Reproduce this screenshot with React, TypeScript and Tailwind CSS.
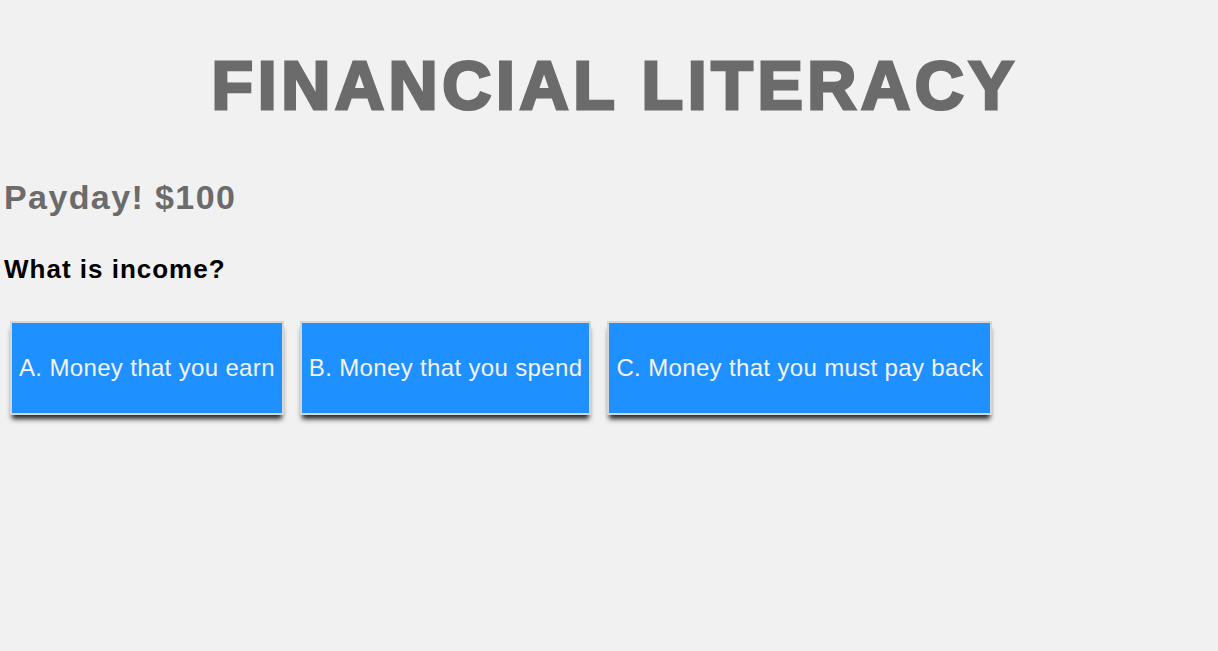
import React from 'react';

const answers = ['A. Money that you earn', 'B. Money that you spend', 'C. Money that you must pay back'];

export default function App() {
  return (
    <div className="min-h-[651px] bg-[#f1f1f1] px-[4px] font-['Liberation_Sans',Arial,sans-serif]">
      <h1 className="pt-[45px] pl-[12px] text-center text-[68px] leading-[80px] font-bold tracking-[4.6px] text-[#6b6b6b] [-webkit-text-stroke:3px_#6b6b6b]">
        FINANCIAL LITERACY
      </h1>
      <h2 className="mt-[52px] text-[34px] leading-[40px] font-bold tracking-[1.4px] text-[#6b6b6b]">Payday! $100</h2>
      <h3 className="mt-[37px] text-[26px] leading-[30px] font-bold tracking-[1px] text-black">What is income?</h3>
      <div className="mt-[37px] flex gap-[16px] pl-[6px]">
        {answers.map((a) => (
          <button
            key={a}
            className="h-[94px] border-2 border-[#d6d6d6] bg-[#1e90ff] px-[7px] text-[24px] tracking-[0.35px] text-[#f4f4f4] shadow-[0_6px_5px_-2px_rgba(0,0,0,0.85)]"
          >
            {a}
          </button>
        ))}
      </div>
    </div>
  );
}
